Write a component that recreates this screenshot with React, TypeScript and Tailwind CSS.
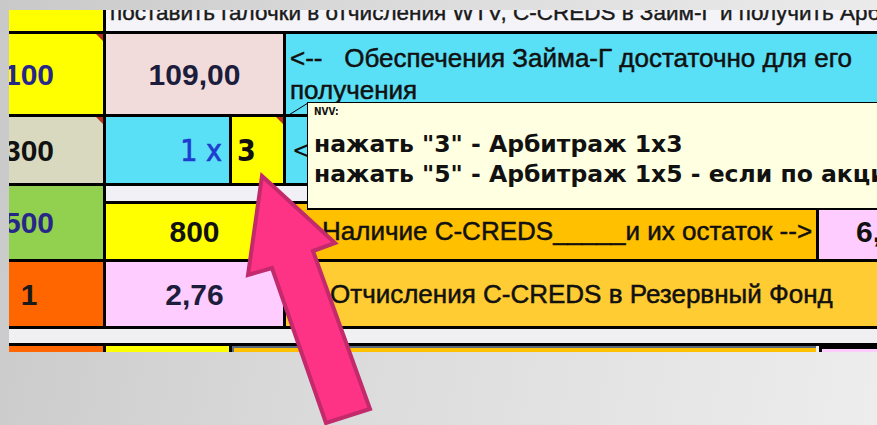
import React from "react";

// Small red comment marker in a cell's top-right corner.
function Marker() {
  return (
    <span className="absolute right-0 top-0 w-[7px] h-[7px] bg-[#b8321e] [clip-path:polygon(0_0,100%_0,100%_100%)]" />
  );
}

export default function App() {
  return (
    <div className="relative w-[877px] h-[425px] overflow-hidden bg-[linear-gradient(100deg,#c9c9c9_0%,#dadada_40%,#ededed_100%)] font-['Liberation_Sans',Arial,sans-serif]">
      <div className="pl-[9px] pt-[10px]">
        <div className="relative w-[868px] h-[342px] overflow-hidden">
          <div className="ml-[-54px] w-[1070px] grid grid-cols-[148px_123px_51px_530px_200px] grid-rows-[21px_80px_66px_15px_55px_64px_14px_20px] gap-[3px] bg-black">
            {/* row 0 */}
            <div className="bg-[#ffff00]" />
            <div className="col-span-4 bg-[#f4f4f8] pl-[4px] overflow-hidden">
              <div className="text-[22.5px] leading-[23px] mt-[-9px] text-[#1a1a1a] [-webkit-text-stroke:0.4px_#1a1a1a] whitespace-nowrap">
                поставить галочки в отчисления WTV, C-CREDS в Займ-Г и получить Арбитраж
              </div>
            </div>

            {/* row 1 */}
            <div className="relative bg-[#ffff00] flex items-center justify-center">
              <span className="text-[30px] font-bold text-[#27278a]">100</span>
              <Marker />
            </div>
            <div className="col-span-2 bg-[#f2dcdb] flex items-center justify-center">
              <span className="text-[30px] font-bold text-[#1c1c3c]">109,00</span>
            </div>
            <div className="col-span-2 bg-[#5ae0f6] pl-[4px] pt-[8px]">
              <p className="text-[26px] leading-[32px] text-[#111] [-webkit-text-stroke:0.5px_#111] whitespace-pre-wrap w-[585px]">
                {"<--   Обеспечения Займа-Г достаточно для его получения"}
              </p>
            </div>

            {/* row 2 */}
            <div className="relative bg-[#d9d9c0] flex items-center justify-center">
              <span className="text-[30px] font-bold text-[#111]">300</span>
              <Marker />
            </div>
            <div className="bg-[#5ae0f6] flex items-center justify-end pr-[7px]">
              <span className="text-[30px] font-['DejaVu_Sans_Condensed','DejaVu_Sans',sans-serif] text-[#1f3cd0] [-webkit-text-stroke:0.7px_#1f3cd0]">
                1 x
              </span>
            </div>
            <div className="relative bg-[#ffff00] flex items-center pl-[5px]">
              <span className="text-[30px] font-bold font-['DejaVu_Sans_Condensed','DejaVu_Sans',sans-serif] text-[#111]">
                3
              </span>
              <Marker />
            </div>
            <div className="col-span-2 bg-[#5ae0f6] flex items-center pl-[6px]">
              <span className="text-[26px] font-['DejaVu_Sans_Condensed','DejaVu_Sans',sans-serif] text-[#111]">
                {"<"}
              </span>
            </div>

            {/* spacer row + green cell spanning into row 3 */}
            <div className="row-span-2 bg-[#92d050] flex items-center justify-center">
              <span className="text-[30px] font-bold text-[#27278a]">500</span>
            </div>
            <div className="col-span-4 bg-[#f0f0f6]" />

            {/* row 3 */}
            <div className="col-span-2 bg-[#ffff00] flex items-center justify-center">
              <span className="text-[30px] font-bold text-[#111]">800</span>
            </div>
            <div className="bg-[#ffc000] flex items-center pl-[36px]">
              <span className="text-[26px] text-[#111] [-webkit-text-stroke:0.5px_#111] whitespace-nowrap">
                Наличие C-CREDS_____и их остаток --&gt;
              </span>
            </div>
            <div className="bg-[#ffccff] flex items-center pl-[37px]">
              <span className="text-[30px] font-bold text-[#111]">6,</span>
            </div>

            {/* row 4 */}
            <div className="bg-[#ff6600] flex items-center justify-center">
              <span className="text-[30px] font-bold text-[#1a1a1a]">1</span>
            </div>
            <div className="col-span-2 bg-[#ffccff] flex items-center justify-center">
              <span className="text-[30px] font-bold text-[#1c1c3c]">2,76</span>
            </div>
            <div className="col-span-2 bg-[#ffcc33] flex items-center pl-[44px]">
              <span className="text-[26px] text-[#111] [-webkit-text-stroke:0.5px_#111] whitespace-nowrap">
                Отчисления C-CREDS в Резервный Фонд
              </span>
            </div>

            {/* spacer row 2 */}
            <div className="col-span-5 bg-[#f0f0f2]" />

            {/* row 5 */}
            <div className="bg-[#ff6600]" />
            <div className="bg-[#ffff00]" />
            <div className="col-span-3 bg-[#f0f0f2] flex gap-[3px]">
              <div className="w-[584px] bg-[#ffc000] border-t-2 border-l-2 border-[#5a6a80]" />
              <div className="flex-1 bg-black pt-[3px] pl-[3px]">
                <div className="h-full bg-[#ffccff]" />
              </div>
            </div>
          </div>

          {/* connector from the comment marker to its note */}
          <svg className="absolute left-[270px] top-[88px] w-[32px] h-[24px]" viewBox="0 0 32 24">
            <line x1="5" y1="20" x2="29" y2="5" stroke="#000" strokeWidth="1" />
          </svg>

          {/* comment note */}
          <div className="absolute left-[298px] top-[92px] w-[620px] h-[108px] bg-[#ffffe1] border border-black border-b-2 pl-[6px] pt-[3px] font-['DejaVu_Sans',sans-serif] text-[#111]">
            <div className="text-[10px] font-bold leading-[12px] font-['DejaVu_Sans_Condensed','DejaVu_Sans',sans-serif]">NVV:</div>
            <div className="text-[23.5px] font-bold leading-[30px] mt-[11px] whitespace-nowrap">
              нажать "3" - Арбитраж 1x3
            </div>
            <div className="text-[23.5px] font-bold leading-[30px] whitespace-nowrap">
              нажать "5" - Арбитраж 1x5 - если по акции
            </div>
          </div>
        </div>
      </div>

      {/* pointer arrow */}
      <svg className="absolute inset-0 w-[877px] h-[425px] pointer-events-none" viewBox="0 0 877 425">
        <polygon
          points="262,176 335,243 313,251 370,409 326,423 272,268 248,275"
          fill="#ff3385"
          stroke="#c22a6c"
          strokeWidth="4"
          strokeLinejoin="miter"
        />
      </svg>
    </div>
  );
}
